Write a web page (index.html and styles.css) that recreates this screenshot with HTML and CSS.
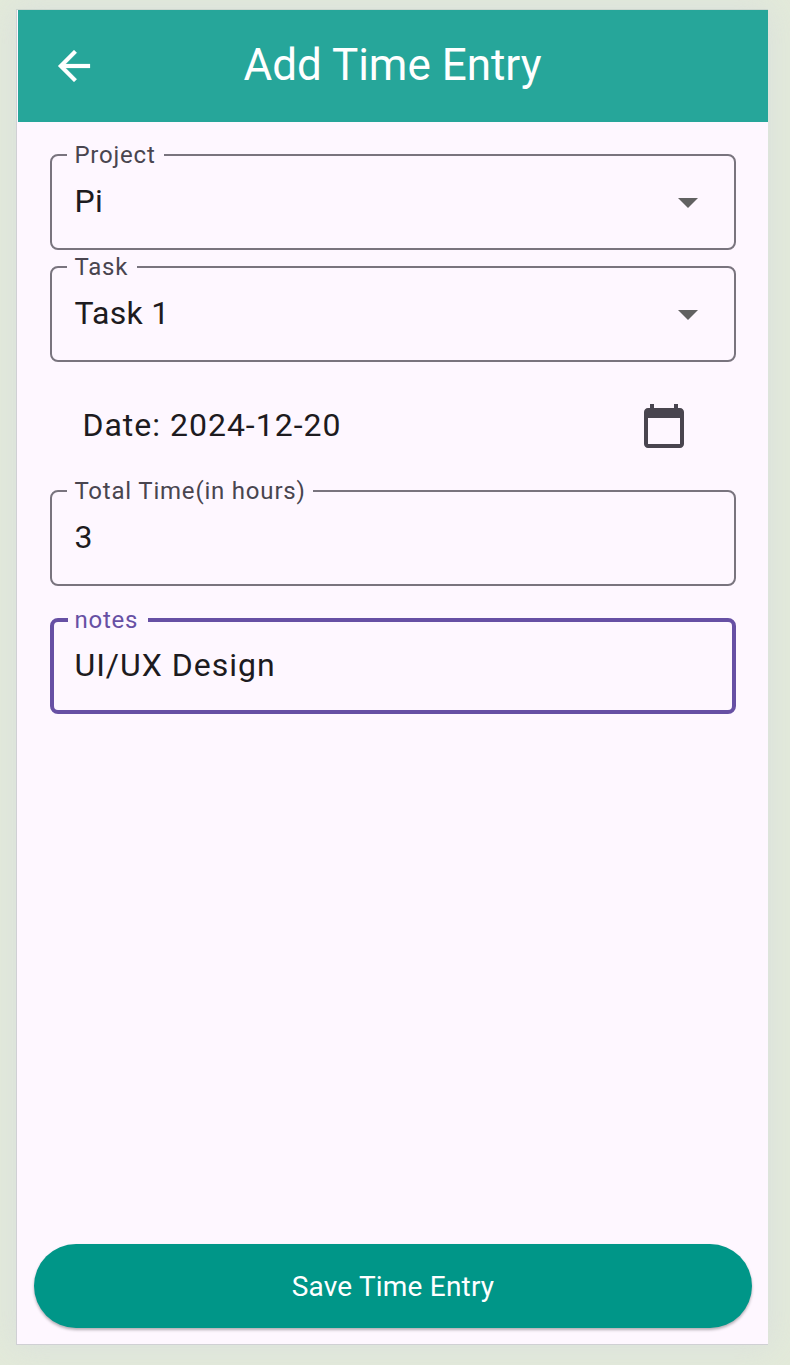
FILE: index.html
```html
<!DOCTYPE html>
<html lang="en">
<head>
<meta charset="utf-8">
<title>Add Time Entry</title>
<link rel="stylesheet" href="styles.css">
</head>
<body>
<main class="screen">
  <header class="appbar">
    <svg class="back" viewBox="0 0 24 24"><path d="M20 11H7.830l5.590-5.590L12 4l-8 8 8 8 1.410-1.410L7.830 13H20z"/></svg>
    <h1 class="title">Add Time Entry</h1>
  </header>
  <form class="form">
    <fieldset class="field">
      <legend class="label label-project">Project</legend>
      <span class="value selected">Pi</span>
      <svg class="caret" viewBox="0 0 20 10"><path d="M0 0h20L10 10z"/></svg>
    </fieldset>
    <fieldset class="field">
      <legend class="label label-task">Task</legend>
      <span class="value selected">Task 1</span>
      <svg class="caret" viewBox="0 0 20 10"><path d="M0 0h20L10 10z"/></svg>
    </fieldset>
    <div class="date-row">
      <span class="date">Date: 2024-12-20</span>
      <svg class="calendar" viewBox="0 0 24 24"><path d="M20 3h-1V1h-2v2H7V1H5v2H4c-1.100 0-2 .9-2 2v16c0 1.100.9 2 2 2h16c1.100 0 2-.9 2-2V5c0-1.100-.9-2-2-2zm0 18H4V8h16v13z"/></svg>
    </div>
    <fieldset class="field">
      <legend class="label label-time">Total Time(in hours)</legend>
      <span class="value">3</span>
    </fieldset>
    <fieldset class="field focused">
      <legend class="label label-notes">notes</legend>
      <span class="value">UI/UX Design</span>
    </fieldset>
  </form>
  <button class="save" type="button">Save Time Entry</button>
</main>
</body>
</html>
```

FILE: styles.css
```css
* { box-sizing: border-box; }

body {
  margin: 0;
  padding: 10px 22px 20px 16px;
  height: 1365px;
  background: #e3eada;
  font-family: Roboto, sans-serif;
  color: #1d1b20;
  overflow: hidden;
}

.screen {
  height: 1335px;
  display: flex;
  flex-direction: column;
  background: #fef7ff;
  border-left: 1px solid #d0d0d4;
  border-bottom: 1px solid #d0d0d4;
  padding-left: 1px;
  box-shadow: 0 -1px 0 #ccd6ce, 0 0 32px 2px rgba(214, 220, 222, 0.7);
}

.appbar {
  flex: none;
  height: 112px;
  display: grid;
  grid-template-columns: 112px 1fr 112px;
  align-items: center;
  background: #26a69a;
  color: #fff;
}

.back {
  width: 48px;
  height: 48px;
  justify-self: center;
  fill: #fff;
  stroke: #fff;
  stroke-width: 0.1;
}

.title {
  margin: 0;
  padding: 0 1px 2px 0;
  text-align: center;
  font-size: 44px;
  line-height: 56px;
  font-weight: 400;
  white-space: nowrap;
}

.form {
  padding: 32px 32px 0;
}

.field {
  position: relative;
  height: 96px;
  margin: 0 0 16px;
  padding: 0;
  border: 2px solid #79747e;
  border-radius: 8px;
  min-width: 0;
}

.label {
  height: 2px;
  margin-left: 15px;
  padding: 0 0 0 7.4px;
  font-size: 24px;
  line-height: 2px;
  letter-spacing: 0.8px;
  color: #49454f;
  white-space: nowrap;
}

.label-project { width: 97px; }
.label-task { width: 70px; }
.label-time { width: 246px; }
.label-notes { width: 80px; }

.value {
  display: block;
  padding: 25px 0 0 22.4px;
  font-size: 32px;
  line-height: 40px;
  letter-spacing: 1px;
}

.selected {
  letter-spacing: 0.3px;
}

.caret {
  position: absolute;
  right: 36px;
  top: 42px;
  width: 20px;
  height: 10px;
  fill: #616161;
}

.date-row {
  height: 112px;
  padding: 0 48px 16px 32.4px;
  display: flex;
  align-items: center;
  justify-content: space-between;
}

.date {
  padding-bottom: 2px;
  font-size: 32px;
  line-height: 40px;
  letter-spacing: 1px;
}

.calendar {
  width: 48px;
  height: 48px;
  fill: #49454f;
}

.focused {
  margin-top: 32px;
  border: 4px solid #6750a4;
}

.focused .label {
  height: 4px;
  line-height: 4px;
  margin-left: 14px;
  padding-left: 6.4px;
  color: #6750a4;
}

.focused .value {
  padding: 23px 0 0 20.4px;
}

.save {
  flex: none;
  height: 84px;
  margin: auto 16px 16px;
  padding: 2px 0 0;
  border: 0;
  border-radius: 42px;
  background: #009688;
  color: #fff;
  font: 400 28px/40px Roboto, sans-serif;
  letter-spacing: 0.2px;
  box-shadow: 0 2px 3px rgba(0, 0, 0, 0.3);
}
```
